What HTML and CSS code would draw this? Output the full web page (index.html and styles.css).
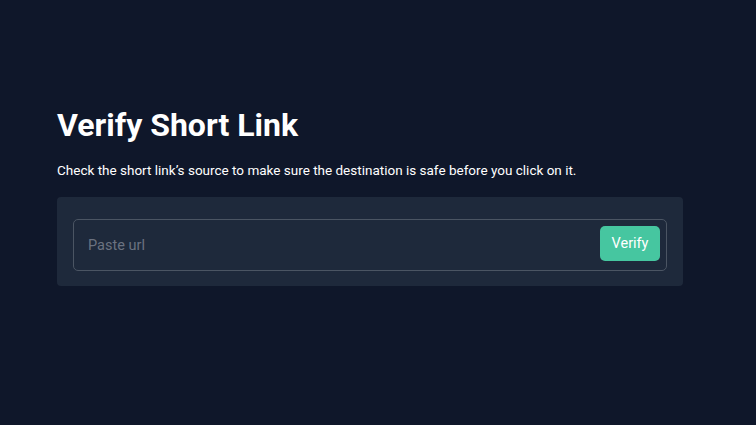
FILE: index.html
```html
<!DOCTYPE html>
<html lang="en">
<head>
    <meta charset="UTF-8">
    <meta name="viewport" content="width=device-width, initial-scale=1.0">
    <title>Verify Short Link</title>
    <link rel="stylesheet" href="styles.css">
</head>
<body>
    <main class="page">
        <h1 class="title">Verify Short Link</h1>
        <p class="subtitle">Check the short link’s source to make sure the destination is safe before you click on it.</p>

        <div class="card">
            <form class="url-form" onsubmit="return false;">
                <input type="text" class="url-input" placeholder="Paste url">
                <button type="submit" class="verify-button">Verify</button>
            </form>
        </div>
    </main>
</body>
</html>
```

FILE: styles.css
```css
html, body {
    margin: 0;
    padding: 0;
}

body {
    font-family: Roboto, "Liberation Sans", Arial, sans-serif;
    background-color: #0f172a;
    color: #ffffff;
    min-height: 425px;
}

.page {
    width: 626px;
    margin: 0 auto 0 57px;
    padding-top: 104px;
}

.title {
    font-size: 32px;
    font-weight: 700;
    line-height: 42px;
    margin: 0 0 14px 0;
}

.subtitle {
    font-size: 13.5px;
    line-height: 20px;
    margin: 0 0 17px 0;
}

.card {
    background-color: #1e293b;
    border-radius: 4px;
    padding: 22px 16px 15px 16px;
}

.url-form {
    display: flex;
    align-items: center;
    height: 52px;
    box-sizing: border-box;
    border: 1px solid #4b5563;
    border-radius: 5px;
    padding: 0 6px 0 14px;
}

.url-input {
    flex: 1;
    background: transparent;
    border: none;
    outline: none;
    color: #ffffff;
    font-family: inherit;
    font-size: 14.5px;
    padding: 0;
}

.url-input::placeholder {
    color: #6b7280;
}

.verify-button {
    width: 60px;
    height: 35px;
    margin-top: -3px;
    background-color: #46c6a0;
    color: #ffffff;
    border: none;
    border-radius: 5px;
    font-family: inherit;
    font-size: 14.5px;
    font-weight: 400;
    cursor: pointer;
}

.verify-button:hover {
    background-color: #3bb892;
}
```
